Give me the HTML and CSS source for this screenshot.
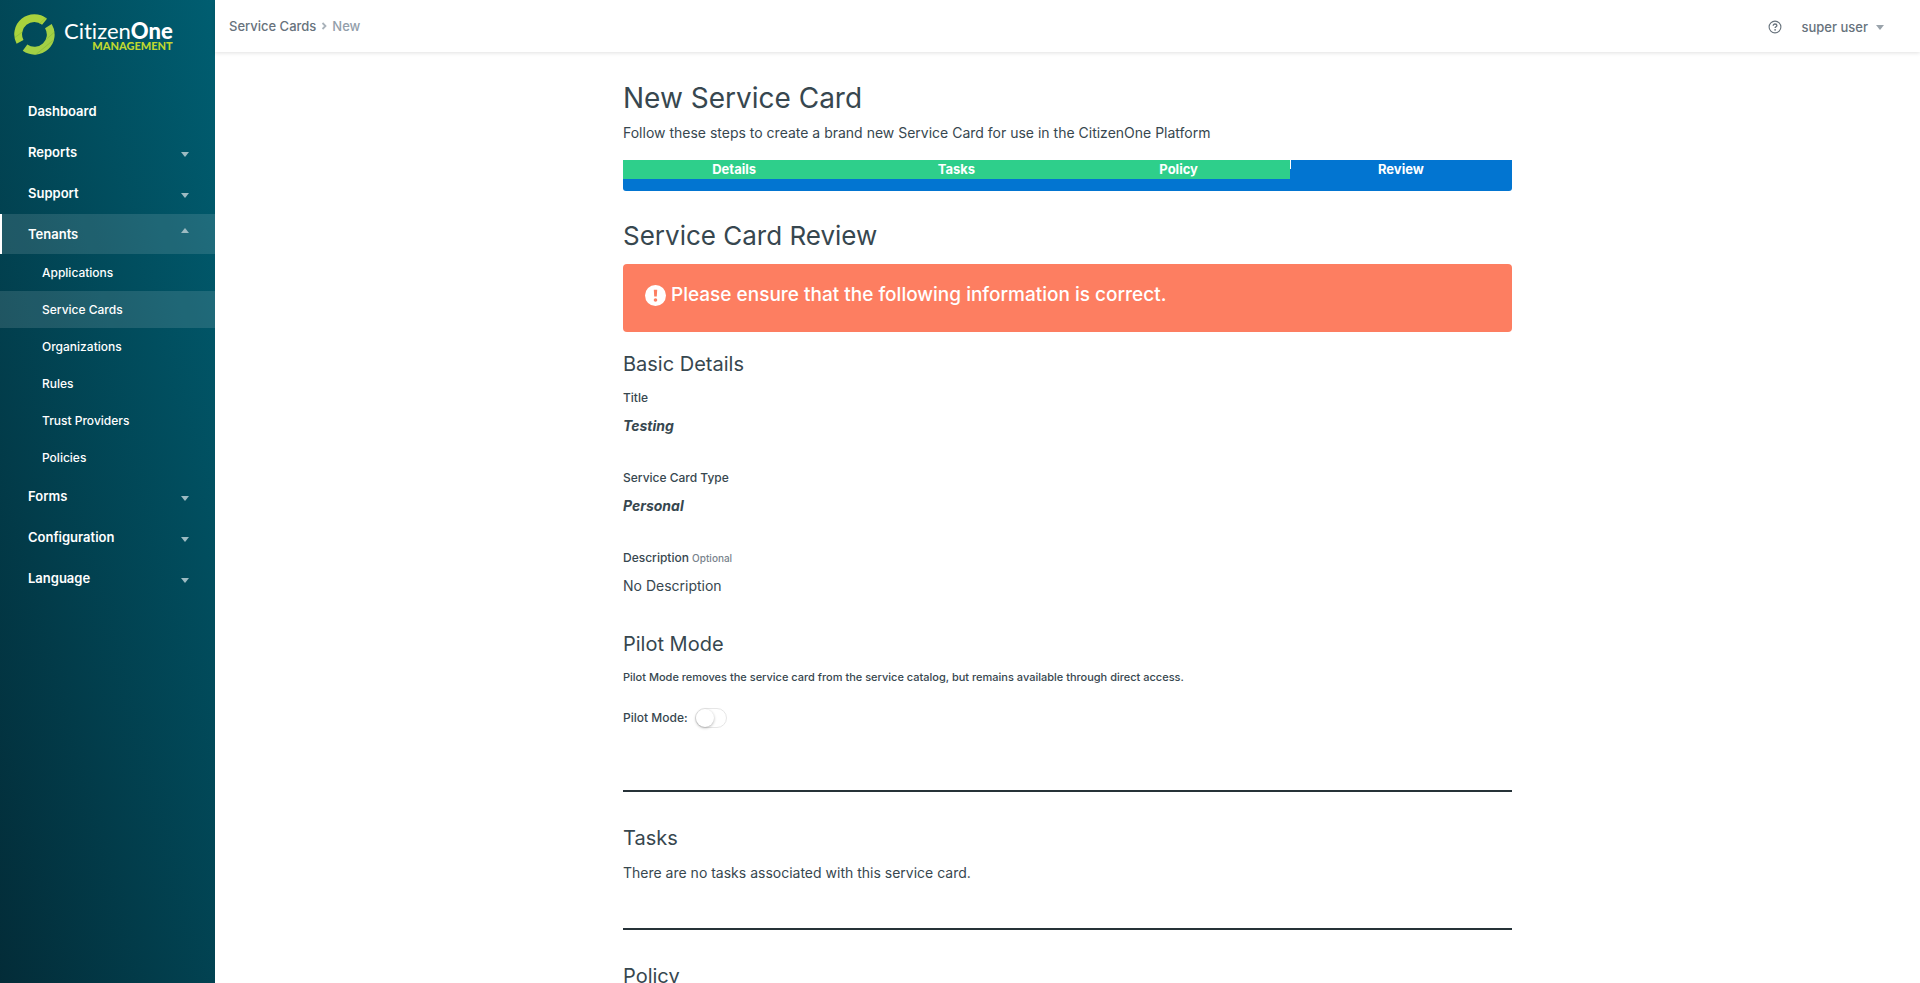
FILE: index.html
```html
<!DOCTYPE html>
<html lang="en">
<head>
<meta charset="utf-8">
<title>New Service Card - CitizenOne Management</title>
<link rel="stylesheet" href="styles.css">
</head>
<body>
<div class="shell">
  <aside class="sidebar">
    <a class="brand" href="#">
      <svg class="brand-mark" viewBox="0 0 42 42" aria-hidden="true">
        <g fill="none" stroke-width="8">
          <path d="M31.3 7.9A16.600 16.600 0 0 0 6.200 28.600" stroke="#a9d23d"/>
          <path d="M35.200 12.400A16.600 16.600 0 0 1 11.300 34.500" stroke="#a3d045"/>
        </g>
        <path d="M26 10L33 3.500M33 26L42 18M23 41L40 27M1 24L9 18" stroke="#7fb136" stroke-width=".5"/>
      </svg>
      <span class="brand-text">
        <span class="brand-name">Citizen<b>One</b></span>
        <span class="brand-sub">MANAGEMENT</span>
      </span>
    </a>
    <nav>
      <ul class="menu">
        <li><a class="menu-link" href="#">Dashboard</a></li>
        <li><button class="menu-link" type="button">Reports<span class="caret"></span></button></li>
        <li><button class="menu-link" type="button">Support<span class="caret"></span></button></li>
        <li>
          <button class="menu-link is-open" type="button" aria-expanded="true">Tenants<span class="caret caret-up"></span></button>
          <ul class="submenu">
            <li><a class="submenu-link" href="#">Applications</a></li>
            <li><a class="submenu-link is-current" href="#">Service Cards</a></li>
            <li><a class="submenu-link" href="#">Organizations</a></li>
            <li><a class="submenu-link" href="#">Rules</a></li>
            <li><a class="submenu-link" href="#">Trust Providers</a></li>
            <li><a class="submenu-link" href="#">Policies</a></li>
          </ul>
        </li>
        <li><button class="menu-link" type="button">Forms<span class="caret"></span></button></li>
        <li><button class="menu-link" type="button">Configuration<span class="caret"></span></button></li>
        <li><button class="menu-link" type="button">Language<span class="caret"></span></button></li>
      </ul>
    </nav>
  </aside>

  <div class="page">
    <header class="topbar">
      <nav class="crumbs" aria-label="Breadcrumb">
        <a class="crumb" href="#">Service Cards</a>
        <svg class="crumb-sep" viewBox="0 0 6 8" aria-hidden="true"><path d="M1.500 1L4.500 4L1.500 7" fill="none" stroke="#a9b2ba" stroke-width="1.800"/></svg>
        <span class="crumb-current">New</span>
      </nav>
      <div class="account">
        <a class="help" href="#" aria-label="Help">
          <svg class="help-icon" viewBox="0 0 14 14" aria-hidden="true"><circle cx="7" cy="7" r="5.900" fill="none" stroke="#67727c" stroke-width="1.100"/><path d="M5.200 5.700C5.200 4.500 6 4 7 4S8.900 4.600 8.900 5.500C8.900 6.800 7.100 6.700 7.100 8" fill="none" stroke="#67727c" stroke-width="1.300"/><circle cx="7.100" cy="9.800" r=".85" fill="#67727c"/></svg>
        </a>
        <button class="user" type="button">super user<span class="caret caret-grey"></span></button>
      </div>
    </header>

    <main class="content">
      <div class="column">
        <h1 class="title">New Service Card</h1>
        <p class="lead">Follow these steps to create a brand new Service Card for use in the CitizenOne Platform</p>

        <ol class="steps">
          <li class="step">Details</li>
          <li class="step">Tasks</li>
          <li class="step">Policy</li>
          <li class="step step-active" aria-current="step">Review</li>
        </ol>

        <h2 class="heading">Service Card Review</h2>
        <div class="alert" role="alert">
          <svg class="alert-icon" viewBox="0 0 20 20" aria-hidden="true"><circle cx="10" cy="10" r="10" fill="#fff"/><path d="M8.400 4.500h3.200l-.4 6.500H8.800z" fill="#fd7e61"/><circle cx="10" cy="14.200" r="1.700" fill="#fd7e61"/></svg>
          <span>Please ensure that the following information is correct.</span>
        </div>

        <h3 class="subheading">Basic Details</h3>
        <dl class="fields">
          <div class="field"><dt class="label">Title</dt><dd class="value strong">Testing</dd></div>
          <div class="field"><dt class="label">Service Card Type</dt><dd class="value strong">Personal</dd></div>
          <div class="field"><dt class="label">Description <small class="optional">Optional</small></dt><dd class="value">No Description</dd></div>
        </dl>

        <section class="pilot">
          <h3 class="subheading">Pilot Mode</h3>
          <p class="note">Pilot Mode removes the service card from the service catalog, but remains available through direct access.</p>
          <div class="toggle-row">
            <label class="label" for="pilot">Pilot Mode:</label>
            <input class="toggle" id="pilot" type="checkbox" role="switch">
          </div>
        </section>

        <section class="block tasks">
          <h3 class="subheading">Tasks</h3>
          <p class="value">There are no tasks associated with this service card.</p>
        </section>

        <section class="block">
          <h3 class="subheading">Policy</h3>
        </section>
      </div>
    </main>
  </div>
</div>
</body>
</html>
```

FILE: styles.css
```css
* { box-sizing: border-box; }

body, h1, h2, h3, p, ul, ol, dl, dd { margin: 0; padding: 0; }

body {
  font-family: Inter, "Liberation Sans", sans-serif;
  font-size: 14px;
  color: #37474f;
  background: #fff;
}

ul, ol { list-style: none; }
a { color: inherit; text-decoration: none; }
button { font: inherit; color: inherit; background: none; border: 0; cursor: pointer; }

.shell { display: flex; height: 100vh; }

.sidebar {
  flex: 0 0 215px;
  background: linear-gradient(75deg, #032c38, #005e71);
  color: #fff;
}

.brand { display: flex; gap: 9px; height: 91px; padding: 14px 0 0 14px; }
.brand-mark { width: 41px; height: 41px; }
.brand-text { display: flex; flex-direction: column; align-items: flex-end; padding-top: 7px; }
.brand-name { font: 22px/20px Lato, sans-serif; font-variant-ligatures: none; }
.brand-name b { font-weight: 900; }
.brand-sub { font: 900 11px/10px Lato, sans-serif; color: #bfd730; }

.menu { display: flex; flex-direction: column; gap: 1px; }
.menu-link {
  display: flex;
  align-items: center;
  justify-content: space-between;
  width: 100%;
  height: 40px;
  padding: 0 26px 0 25px;
  border-left: 3px solid transparent;
  font-size: 13px;
  font-weight: 600;
  text-align: left;
}
.is-open { background: rgba(255, 255, 255, 0.12); border-left: 2px solid #fff; padding-left: 26px; }
.submenu { margin-bottom: -1px; }
.submenu-link {
  display: flex;
  align-items: center;
  height: 37px;
  padding-left: 42px;
  font-size: 12px;
  font-weight: 500;
}
.is-current { background: rgba(255, 255, 255, 0.12); }

.caret {
  border: 4px solid transparent;
  border-top: 5px solid #9dbbc2;
  border-bottom: 0;
  margin-top: 5px;
}
.caret-up { border-top: 0; border-bottom: 5px solid #9dbbc2; margin: 0 0 8px; }
.caret-grey { border-top-color: #9aa3ab; margin: 0; }

.page { flex: 1; display: flex; flex-direction: column; min-width: 0; }

.topbar {
  display: flex;
  justify-content: space-between;
  align-items: center;
  height: 52px;
  padding: 0 36px 0 14px;
  box-shadow: 0 1px 4px rgba(0, 0, 0, 0.12);
  font-size: 13px;
  font-weight: 500;
  color: #67727c;
}
.crumbs { display: flex; align-items: center; gap: 5px; }
.crumb-sep { width: 6px; height: 8px; }
.crumb-current { color: #929eaa; }
.account { display: flex; align-items: center; gap: 20px; padding-top: 2px; }
.help { display: flex; }
.help-icon { width: 14px; height: 14px; }
.user { display: flex; align-items: center; gap: 8px; padding: 0; }

.content { flex: 1; overflow-y: auto; scrollbar-width: none; padding: 26px 24px; }
.column { max-width: 889px; margin: 0 auto; }

.title { font-size: 28px; line-height: 40px; font-weight: 400; }
.lead { margin-top: 3px; line-height: 24px; }

.steps {
  display: flex;
  margin-top: 15px;
  padding-bottom: 12px;
  background: #0275d1;
  border-radius: 0 0 3px 3px;
}
.step {
  flex: 1;
  background: #2ecf8b;
  color: #fff;
  font-size: 13px;
  line-height: 19px;
  font-weight: 700;
  text-align: center;
}
.step-active { background: linear-gradient(#fff, #fff) 0 0 / 1px 9px no-repeat #0275d1; }

.heading { margin-top: 27px; font-size: 26px; line-height: 36px; font-weight: 400; }

.alert {
  display: flex;
  align-items: center;
  gap: 5px;
  margin-top: 10px;
  padding: 18px 22px 24px;
  background: #fd7e61;
  border-radius: 4px;
  color: #fff;
  font-size: 19px;
  line-height: 26px;
  font-weight: 500;
}
.alert-icon { width: 21px; height: 21px; }

.subheading { margin-top: 18px; font-size: 20px; line-height: 28px; font-weight: 400; }
.fields { display: grid; gap: 30px; margin-top: 10px; }
.label { font-size: 12px; line-height: 20px; font-weight: 500; }
.value { font-size: 14px; line-height: 24px; }
.field .value { margin-top: 6px; }
.strong { font-weight: 700; font-style: italic; }
.optional { font-size: 10px; color: #78838c; }

.pilot { padding: 32px 0 62px; }
.pilot .subheading, .block .subheading { margin: 0 0 9px; }
.note { font-size: 11px; line-height: 20px; font-weight: 500; }
.toggle-row { display: flex; align-items: center; gap: 7px; margin-top: 21px; }
.toggle {
  appearance: none;
  width: 32px;
  height: 20px;
  margin: 0;
  border: 1px solid #e6e6e6;
  border-radius: 10px;
}
.toggle::before {
  content: "";
  display: block;
  width: 18px;
  height: 18px;
  border-radius: 50%;
  background: #fff;
  box-shadow: 0 1px 3px rgba(0, 0, 0, 0.3);
}

.block { padding-top: 32px; border-top: 2px solid #263238; }
.tasks { padding-bottom: 43px; }
```
